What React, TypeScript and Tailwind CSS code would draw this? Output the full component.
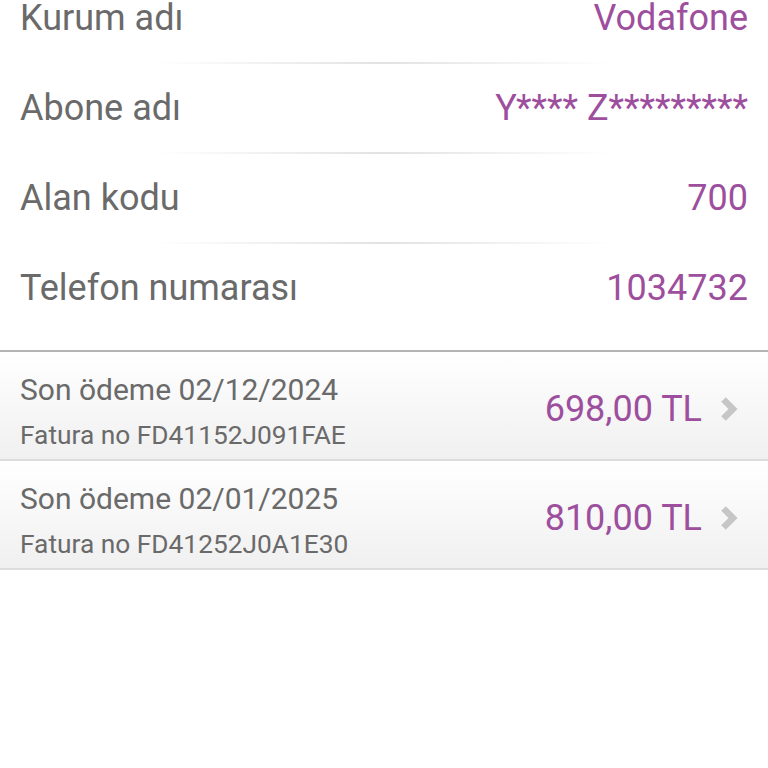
import React from 'react';

const details = [
   { label: 'Kurum adı', value: 'Vodafone' },
   { label: 'Abone adı', value: 'Y**** Z*********' },
   { label: 'Alan kodu', value: '700' },
   { label: 'Telefon numarası', value: '1034732' },
];

const bills = [
   { date: '02/12/2024', no: 'FD41152J091FAE', amount: '698,00 TL' },
   { date: '02/01/2025', no: 'FD41252J0A1E30', amount: '810,00 TL' },
];

const Chevron = () => (
   <svg width="18" height="26" viewBox="0 0 18 26" className="shrink-0">
      <path d="M3.5 3.5 L13 13 L3.5 22.5" fill="none" stroke="#c6c6c6" strokeWidth="6.5" />
   </svg>
);

const App = () => {
   return (
      <main className="min-h-[768px] bg-white font-['Roboto',sans-serif] overflow-hidden">
         <div className="-mt-[26px]">
            {details.map((d, i) => (
               <div key={d.label}>
                  <div className="flex items-center justify-between h-[88px] px-5">
                     <span className="text-[36px] text-[#6a6a6a]">{d.label}</span>
                     <span className="text-[36px] text-[#9d4f9e]">{d.value}</span>
                  </div>
                  {i < details.length - 1 && (
                     <div className="mx-auto h-[2px] w-[460px] bg-gradient-to-r from-transparent via-[#e2e2e2] to-transparent" />
                  )}
               </div>
            ))}
         </div>
         <div className="mt-[18px] border-t-2 border-[#b4b4b4]">
            {bills.map((b) => (
               <div
                  key={b.no}
                  className="flex items-center justify-between h-[109px] pt-[6px] pl-5 pr-[30px] border-b-2 border-[#dcdcdc] bg-gradient-to-b from-white to-[#f0f0f0]"
               >
                  <div className="flex flex-col gap-[11px] mt-[6px]">
                     <span className="text-[30px] leading-[36px] text-[#6a6a6a]">Son ödeme {b.date}</span>
                     <span className="text-[26.3px] leading-[32px] text-[#6a6a6a]">Fatura no {b.no}</span>
                  </div>
                  <div className="flex items-center gap-[18px]">
                     <span className="text-[36px] text-[#9d4f9e]">{b.amount}</span>
                     <Chevron />
                  </div>
               </div>
            ))}
         </div>
      </main>
   );
};

export default App;
